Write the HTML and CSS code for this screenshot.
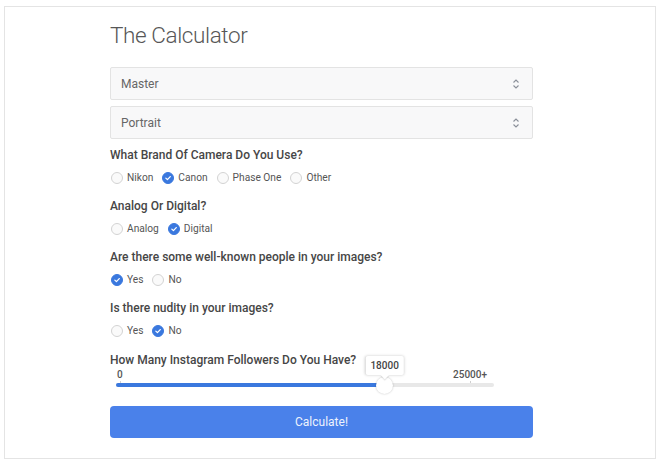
FILE: index.html
```html
<!DOCTYPE html>
<html lang="en">
<head>
<meta charset="utf-8">
<title>The Calculator</title>
<link rel="stylesheet" href="styles.css">
</head>
<body>
<div class="frame">
  <div class="calc">
    <h1 class="title">The Calculator</h1>

    <div class="select">
      <span>Master</span>
      <svg class="chev" width="8" height="12" viewBox="0 0 8 12"><path d="M1.5 4.5 L4 2 L6.5 4.5 M1.5 7.5 L4 10 L6.5 7.5" fill="none" stroke="#8a8f99" stroke-width="1.1"/></svg>
    </div>
    <div class="select">
      <span>Portrait</span>
      <svg class="chev" width="8" height="12" viewBox="0 0 8 12"><path d="M1.5 4.5 L4 2 L6.5 4.5 M1.5 7.5 L4 10 L6.5 7.5" fill="none" stroke="#8a8f99" stroke-width="1.1"/></svg>
    </div>

    <div class="field first">
      <div class="q">What Brand Of Camera Do You Use?</div>
      <div class="options">
        <label class="opt"><span class="radio"></span>Nikon</label>
        <label class="opt"><span class="radio on"><svg viewBox="0 0 12 12"><path d="M3.4 6.2 L5.3 8 L8.7 4.3" fill="none" stroke="#fff" stroke-width="1.5" stroke-linecap="round" stroke-linejoin="round"/></svg></span>Canon</label>
        <label class="opt"><span class="radio"></span>Phase One</label>
        <label class="opt"><span class="radio"></span>Other</label>
      </div>
    </div>

    <div class="field">
      <div class="q">Analog Or Digital?</div>
      <div class="options">
        <label class="opt"><span class="radio"></span>Analog</label>
        <label class="opt"><span class="radio on"><svg viewBox="0 0 12 12"><path d="M3.4 6.2 L5.3 8 L8.7 4.3" fill="none" stroke="#fff" stroke-width="1.5" stroke-linecap="round" stroke-linejoin="round"/></svg></span>Digital</label>
      </div>
    </div>

    <div class="field">
      <div class="q">Are there some well-known people in your images?</div>
      <div class="options">
        <label class="opt"><span class="radio on"><svg viewBox="0 0 12 12"><path d="M3.4 6.2 L5.3 8 L8.7 4.3" fill="none" stroke="#fff" stroke-width="1.5" stroke-linecap="round" stroke-linejoin="round"/></svg></span>Yes</label>
        <label class="opt"><span class="radio"></span>No</label>
      </div>
    </div>

    <div class="field">
      <div class="q">Is there nudity in your images?</div>
      <div class="options">
        <label class="opt"><span class="radio"></span>Yes</label>
        <label class="opt"><span class="radio on"><svg viewBox="0 0 12 12"><path d="M3.4 6.2 L5.3 8 L8.7 4.3" fill="none" stroke="#fff" stroke-width="1.5" stroke-linecap="round" stroke-linejoin="round"/></svg></span>No</label>
      </div>
    </div>

    <div class="slider-field">
      <div class="q">How Many Instagram Followers Do You Have?</div>
      <div class="slider" style="--p: 0.72">
        <div class="scale"><span class="mark">0</span><span class="mark">25000+</span></div>
        <div class="track">
          <div class="fill"></div>
          <div class="thumb"><div class="tip">18000</div></div>
        </div>
      </div>
    </div>

    <button class="btn" type="button">Calculate!</button>
  </div>
</div>
</body>
</html>
```

FILE: styles.css
```css
* { box-sizing: border-box; }

html, body {
  margin: 0;
  background: #ffffff;
}

body {
  padding: 6px 4px 0 4px;
  font-family: "Roboto", "Open Sans", sans-serif;
  color: #444;
}

.frame {
  width: 652px;
  height: 453px;
  border: 1px solid #e4e4e4;
  background: #fff;
  padding: 14px 0 0 105px;
}

.calc {
  width: 423px;
  display: flex;
  flex-direction: column;
}

.title {
  margin: 0 0 17px 0;
  font-weight: 300;
  font-size: 22.5px;
  letter-spacing: -0.4px;
  line-height: 29px;
  color: #575757;
}

.select {
  height: 33px;
  border: 1px solid #e3e3e3;
  border-radius: 2px;
  background: #f8f8f9;
  display: flex;
  align-items: center;
  justify-content: space-between;
  padding: 0 12px 0 10px;
  font-size: 12px;
  color: #666;
  margin-bottom: 6px;
}

.field {
  display: flex;
  flex-direction: column;
  gap: 5px;
  margin-bottom: 10px;
}

.field.first {
  margin-top: 1px;
}

.q {
  font-size: 12px;
  font-weight: 500;
  line-height: 18px;
  color: #464646;
}

.options {
  display: flex;
  gap: 9px;
  height: 18px;
  align-items: center;
  padding-left: 1px;
}

.opt {
  display: flex;
  align-items: center;
  gap: 4px;
  font-size: 10.2px;
  color: #555;
  line-height: 18px;
}

.radio {
  width: 12px;
  height: 12px;
  border-radius: 50%;
  border: 1px solid #d3d3d3;
  background: #fafafa;
  display: inline-flex;
}

.radio.on {
  background: #3a78de;
  border-color: #3a78de;
}

.radio svg {
  width: 100%;
  height: 100%;
}

.slider-field {
  display: flex;
  flex-direction: column;
  margin-top: 1px;
}

.slider {
  margin-left: 6px;
  width: 378px;
  padding-top: 0;
  height: 37px;
}

.scale {
  display: flex;
  justify-content: space-between;
  padding: 0 7px 0 1px;
  font-size: 10px;
  font-weight: 500;
  line-height: 12px;
  color: #555;
}

.mark {
  position: relative;
}

.mark::after {
  content: "";
  position: absolute;
  left: 50%;
  top: 12px;
  width: 1px;
  height: 3px;
  background: #cfcfcf;
}

.track {
  position: relative;
  margin-top: 2px;
  height: 4px;
  border-radius: 2px;
  background: #e8e8e8;
}

.fill {
  position: absolute;
  left: 0;
  top: 0;
  bottom: 0;
  width: calc(8px + (100% - 16px) * var(--p));
  background: #3a78de;
  border-radius: 2px;
}

.thumb {
  position: absolute;
  top: 50%;
  left: calc(8px + (100% - 16px) * var(--p));
  width: 17px;
  height: 17px;
  margin: -8.5px 0 0 -8.5px;
  border-radius: 50%;
  background: #fff;
  box-shadow: 0 0 2px rgba(0,0,0,0.25);
}

.tip {
  position: absolute;
  bottom: 19px;
  left: 50%;
  transform: translateX(-50%);
  padding: 0 5px;
  height: 19px;
  line-height: 19px;
  font-size: 10px;
  font-weight: 500;
  color: #444;
  background: #fff;
  border-radius: 2px;
  box-shadow: 0 0 3px rgba(0,0,0,0.22);
  white-space: nowrap;
}

.tip::after {
  content: "";
  position: absolute;
  left: 50%;
  bottom: -3px;
  width: 6px;
  height: 6px;
  margin-left: -3px;
  background: #fff;
  transform: rotate(45deg);
  box-shadow: 1px 1px 1px rgba(0,0,0,0.1);
}

.btn {
  height: 32px;
  border: none;
  border-radius: 4px;
  background: #4a81ea;
  color: #eef3fd;
  font-family: "Roboto", "Open Sans", sans-serif;
  font-size: 12px;
  cursor: pointer;
}
```
